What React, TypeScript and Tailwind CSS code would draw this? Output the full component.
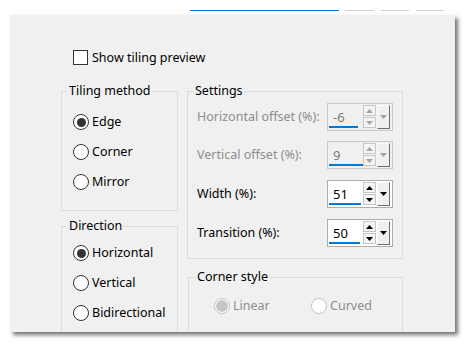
import React from 'react'

const font = { fontFamily: '"Noto Sans", "Open Sans", sans-serif' }

function Radio({ label, checked, disabled }: { label: string; checked?: boolean; disabled?: boolean }) {
  return (
    <div className="flex items-center h-[30px]">
      <span
        className={`w-[16px] h-[16px] rounded-full border flex items-center justify-center ${
          disabled ? 'border-[#c4c4c4] bg-white' : 'border-[#333333] bg-white'
        }`}
      >
        {checked && !disabled && <span className="w-[9px] h-[9px] rounded-full bg-[#333333]" />}
        {checked && disabled && <span className="w-[12px] h-[12px] rounded-full bg-[#c6c6c6]" />}
      </span>
      <span className={`ml-[3px] ${disabled ? 'text-[#8d8d8d]' : 'text-black'}`}>{label}</span>
    </div>
  )
}

function Arrow({ up, color }: { up?: boolean; color: string }) {
  return (
    <svg width="7" height="4" viewBox="0 0 7 4">
      <polygon points={up ? '3.5,0 7,4 0,4' : '0,0 7,0 3.5,4'} fill={color} />
    </svg>
  )
}

function Spinner({ value, bar, disabled }: { value: string; bar: number; disabled?: boolean }) {
  const arrow = disabled ? '#a3a3a3' : '#000000'
  return (
    <div
      className={`w-[66px] h-[28px] border flex items-stretch ${
        disabled ? 'border-[#c9c9c9] bg-[#f0f0f0]' : 'border-[#adadad] bg-white'
      }`}
    >
      <div className="w-[35px] flex flex-col">
        <div className={`flex-1 flex items-center pl-[5px] pt-[3px] text-[13px] ${disabled ? 'text-[#7a7a7a]' : 'text-black'}`}>
          {value}
        </div>
        <div className="h-[2px] ml-px mb-[2px] bg-[#0078d7]" style={{ width: bar }} />
      </div>
      <div className="flex flex-col pt-px gap-px">
        <div className="w-[13px] h-[11px] border border-[#c6c6c6] bg-[#f4f4f4] flex items-center justify-center">
          <Arrow up color={arrow} />
        </div>
        <div className="w-[13px] h-[11px] border border-[#c6c6c6] bg-[#f4f4f4] flex items-center justify-center">
          <Arrow color={arrow} />
        </div>
      </div>
      <div className="ml-px mt-px mb-[1px] w-[13px] bg-[#f0f0f0] border-t border-l border-[#fcfcfc] border-r border-b border-r-[#6e6e6e] border-b-[#6e6e6e] flex items-center justify-center">
        <Arrow color={arrow} />
      </div>
    </div>
  )
}

function SettingRow({ label, value, bar, disabled, mt }: { label: string; value: string; bar: number; disabled?: boolean; mt: string }) {
  return (
    <div className={`flex items-center h-[28px] ${mt}`}>
      <span className={`w-[130px] ${disabled ? 'text-[#8d8d8d]' : 'text-black'}`}>{label}</span>
      <Spinner value={value} bar={bar} disabled={disabled} />
    </div>
  )
}

export default function App() {
  return (
    <div className="w-[466px] h-[345px] bg-white text-[12.5px] leading-[16px]" style={font}>
      <div className="flex h-[11px] items-end">
        <div className="ml-[190px] w-[149px] h-px bg-[#0078d7]" />
        <div className="ml-[6px] w-[29px] h-px bg-[#cfcfcf]" />
        <div className="ml-[7px] w-[28px] h-px bg-[#cfcfcf]" />
        <div className="ml-[7px] w-[28px] h-px bg-[#cfcfcf]" />
      </div>

      <div className="ml-[10px] mt-[4px] w-[445px] h-[317px] bg-[#f0f0f0] overflow-hidden shadow-[3px_3px_4px_rgba(0,0,0,0.55)]">
        <div className="flex items-center ml-[63px] mt-[35px] h-[15px]">
          <span className="w-[15px] h-[15px] border border-[#333333] bg-white" />
          <span className="ml-[4px]">Show tiling preview</span>
        </div>

        <div className="flex mt-[18px] ml-[51px] gap-[9px]">
          <div className="flex flex-col gap-[7px]">
            <fieldset className="w-[117px] h-[128px] border border-[#dcdcdc] px-[11px]">
              <legend className="ml-[-5px] px-px">Tiling method</legend>
              <div className="mt-[8px]">
                <Radio label="Edge" checked />
                <Radio label="Corner" />
                <Radio label="Mirror" />
              </div>
            </fieldset>
            <fieldset className="w-[117px] h-[160px] border border-[#dcdcdc] px-[11px]">
              <legend className="ml-[-5px] px-px">Direction</legend>
              <div className="mt-[4px]">
                <Radio label="Horizontal" checked />
                <Radio label="Vertical" />
                <Radio label="Bidirectional" />
              </div>
            </fieldset>
          </div>

          <div className="flex flex-col gap-[10px]">
            <fieldset className="w-[216px] h-[176px] border border-[#dcdcdc] px-[9px]">
              <legend className="ml-[-3px] px-px">Settings</legend>
              <SettingRow label="Horizontal offset (%):" value="-6" bar={29} disabled mt="mt-[4px]" />
              <SettingRow label="Vertical offset (%):" value="9" bar={34} disabled mt="mt-[10px]" />
              <SettingRow label="Width (%):" value="51" bar={32} mt="mt-[11px]" />
              <SettingRow label="Transition (%):" value="50" bar={31} mt="mt-[11px]" />
            </fieldset>
            <fieldset className="ml-px w-[215px] h-[100px] border border-[#dcdcdc] pl-[25px]">
              <legend className="ml-[-18px] px-px">Corner style</legend>
              <div className="flex mt-[6px]">
                <div className="w-[97px]">
                  <Radio label="Linear" checked disabled />
                </div>
                <Radio label="Curved" disabled />
              </div>
            </fieldset>
          </div>
        </div>
      </div>
    </div>
  )
}
